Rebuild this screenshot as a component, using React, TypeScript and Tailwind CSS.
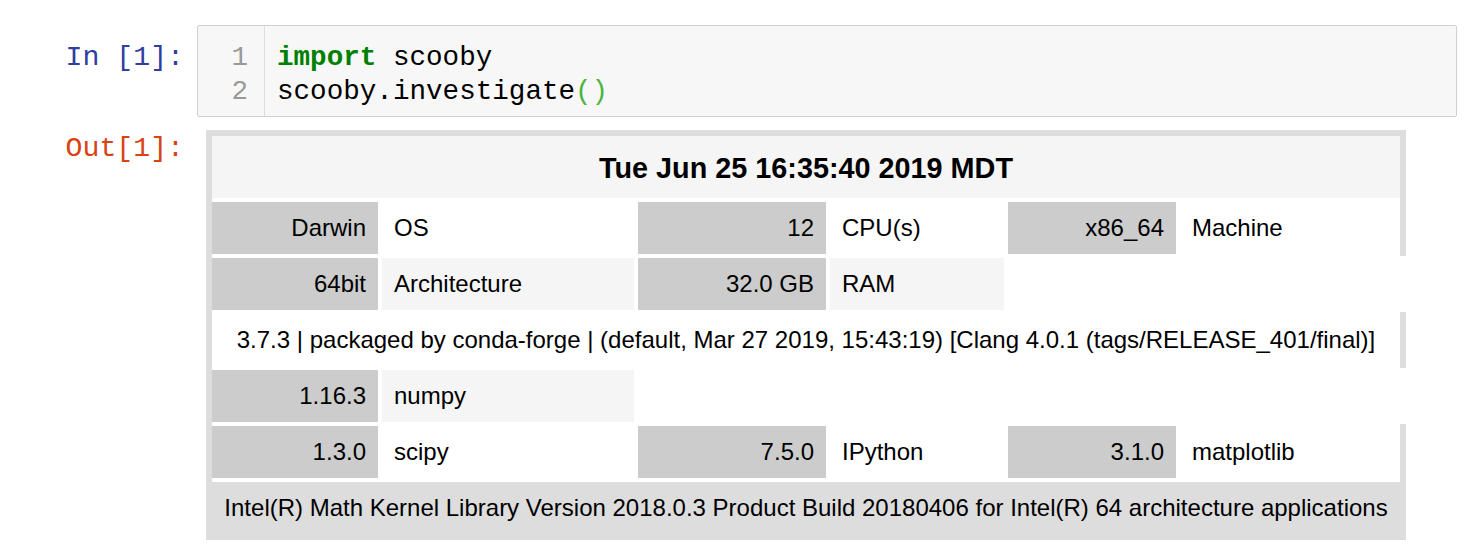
import React from "react";

const mono = { fontFamily: '"Liberation Mono", "DejaVu Sans Mono", monospace' };

type Cell = { v: string; k: string };

function DataRow({ cells, bg, full }: { cells: Cell[]; bg: string; full: boolean }) {
  return (
    <div
      className={
        "grid grid-cols-[166px_252px_188px_174px_168px_220px] gap-x-[4px] py-[2px] " +
        (full ? "border-r-[6px] border-[#ddd]" : "pr-[6px]")
      }
    >
      {cells.map((c, i) => (
        <React.Fragment key={i}>
          <div className="h-[52px] bg-[#ccc] flex items-center justify-end px-[12px]">{c.v}</div>
          <div className={"h-[52px] flex items-center justify-start px-[12px] " + bg}>{c.k}</div>
        </React.Fragment>
      ))}
    </div>
  );
}

export default function App() {
  return (
    <div className="w-[1482px] h-[560px] bg-white overflow-hidden pt-[25px]">
      {/* Input cell */}
      <div className="flex">
        <div
          className="w-[197px] shrink-0 text-right pr-[13px] pt-[16px] text-[28.2px] leading-[34px] text-[#303F9F]"
          style={mono}
        >
          In [1]:
        </div>
        <div className="w-[1260px] h-[92px] border border-[#cfcfcf] rounded-[2px] bg-[#f7f7f7] flex">
          <div
            className="w-[67px] shrink-0 border-r border-[#dddddd] text-right pr-[16px] pt-[15px] text-[27.6px] leading-[34px] text-[#999]"
            style={mono}
          >
            <div>1</div>
            <div>2</div>
          </div>
          <div className="pl-[12px] pt-[15px] text-[27.6px] leading-[34px] text-black" style={mono}>
            <div>
              <span className="font-bold text-[#008000]">import</span> scooby
            </div>
            <div>
              scooby.investigate<span className="text-[#4cb43c]">()</span>
            </div>
          </div>
        </div>
      </div>

      {/* Output cell */}
      <div className="flex mt-[13px]">
        <div
          className="w-[197px] shrink-0 text-right pr-[13px] pt-[2px] text-[28.2px] leading-[34px] text-[#D84315]"
          style={mono}
        >
          Out[1]:
        </div>
        <div
          className="ml-[9px] w-[1200px] border-l-[6px] border-t-[6px] border-b-[6px] border-[#ddd] bg-white text-black text-[24px] leading-none"
          style={{ fontFamily: '"Liberation Sans", Arial, sans-serif' }}
        >
          <div className="pb-[2px] border-r-[6px] border-[#ddd]">
            <div className="h-[62px] pt-[2px] bg-[#f5f5f5] flex items-center justify-center font-bold text-[28.8px]">
              Tue Jun 25 16:35:40 2019 MDT
            </div>
          </div>
          <DataRow
            full
            bg="bg-white"
            cells={[
              { v: "Darwin", k: "OS" },
              { v: "12", k: "CPU(s)" },
              { v: "x86_64", k: "Machine" },
            ]}
          />
          <DataRow
            full={false}
            bg="bg-[#f5f5f5]"
            cells={[
              { v: "64bit", k: "Architecture" },
              { v: "32.0 GB", k: "RAM" },
            ]}
          />
          <div className="py-[2px] border-r-[6px] border-[#ddd]">
            <div className="h-[52px] bg-white flex items-center justify-center whitespace-nowrap">
              3.7.3 | packaged by conda-forge | (default, Mar 27 2019, 15:43:19) [Clang 4.0.1 (tags/RELEASE_401/final)]
            </div>
          </div>
          <DataRow full={false} bg="bg-[#f5f5f5]" cells={[{ v: "1.16.3", k: "numpy" }]} />
          <DataRow
            full
            bg="bg-white"
            cells={[
              { v: "1.3.0", k: "scipy" },
              { v: "7.5.0", k: "IPython" },
              { v: "3.1.0", k: "matplotlib" },
            ]}
          />
          <div className="pt-[2px] border-r-[6px] border-[#ddd]">
            <div className="h-[52px] bg-[#ddd] flex items-center justify-center whitespace-nowrap">
              Intel(R) Math Kernel Library Version 2018.0.3 Product Build 20180406 for Intel(R) 64 architecture applications
            </div>
          </div>
        </div>
      </div>
    </div>
  );
}
